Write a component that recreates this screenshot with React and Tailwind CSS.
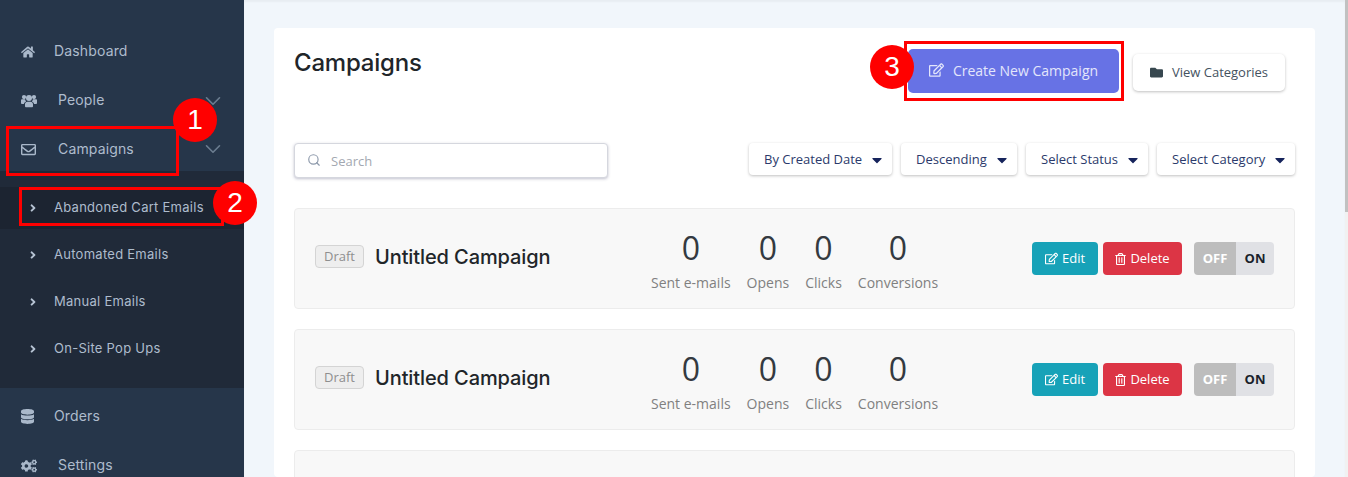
import { ChevronDown, Search } from 'lucide-react';
import {
  FaHome, FaRegEnvelope, FaDatabase, FaCogs, FaAngleRight, FaRegEdit,
  FaFolder, FaRegTrashAlt, FaCaretDown,
} from 'react-icons/fa';

const quick = "font-['Inter',sans-serif]";
const open = "font-['Open_Sans',sans-serif]";

const subLinks = ['Abandoned Cart Emails', 'Automated Emails', 'Manual Emails', 'On-Site Pop Ups'];
const filters = [
  { name: 'By Created Date', width: 'w-[143px]' },
  { name: 'Descending', width: 'w-[116px]' },
  { name: 'Select Status', width: 'w-[122px]' },
  { name: 'Select Category', width: 'w-[138px]' },
];
const stats = ['Sent e-mails', 'Opens', 'Clicks', 'Conversions'];

const UsersIcon = ({ className }) => (
  <svg viewBox="0 0 18 15" fill="currentColor" className={className}>
    <circle cx="3.4" cy="3.6" r="2.4" />
    <circle cx="14.6" cy="3.6" r="2.4" />
    <circle cx="9" cy="4.6" r="3.4" />
    <path d="M0 7.2c0-.6.5-1 1-1h3.6c.1 1 .6 1.9 1.2 2.5C4.4 9.200 3.500 10.400 3.300 11.400H1c-.6 0-1-.4-1-1zM18 7.200c0-.6-.5-1-1-1h-3.600c-.1 1-.6 1.900-1.200 2.500 1.400.5 2.300 1.700 2.500 2.700H17c.6 0 1-.4 1-1z" />
    <path d="M4.500 11.600c0-1.500 1.200-2.700 2.700-2.700h3.600c1.500 0 2.700 1.200 2.700 2.700v2.400c0 .6-.4 1-1 1h-7c-.6 0-1-.4-1-1z" />
  </svg>
);

const NavRow = ({ icon: Icon, iconSize = 'w-[15px] h-[15px]', label, wide, chevron, className = 'h-[49px]' }) => (
  <div className={`flex items-center pl-[21px] pr-[18px] text-[#aebccd] ${className}`}>
    <div className={`flex items-center ${wide ? 'w-[37px]' : 'w-[33px]'}`}>
      <Icon className={`${iconSize} text-[#a9b8ca]`} />
    </div>
    <span className={`${quick} pb-[2px] text-[14px] tracking-[0.15px]`}>{label}</span>
    {chevron && <ChevronDown strokeWidth={1.5} className="ml-auto w-[26px] h-[26px] text-[#6b7d90]" />}
  </div>
);

const Marker = ({ n, className }) => (
  <div className={`absolute w-[44px] h-[44px] rounded-full bg-[#ff0000] text-white flex items-center justify-center font-['Liberation_Sans',sans-serif] text-[28px] ${className}`}>
    {n}
  </div>
);

const CampaignRow = () => (
  <div className="flex items-center h-[101px] shrink-0 mb-[20px] px-[20px] bg-[#f8f8f8] border border-[#ececec] rounded">
    <div className="w-[336px] flex items-center">
      <span className={`${open} w-[49px] h-[23px] mb-[4px] flex items-center justify-center text-[13px] text-[#8e8e8e] bg-[#eeeeee] border border-[#d4d4d4] rounded`}>Draft</span>
      <span className={`${quick} ml-[11px] pb-[4px] text-[20px] font-medium tracking-[-0.1px] text-[#212529]`}>Untitled Campaign</span>
    </div>
    <div className={`${open} flex gap-[16px]`}>
      {stats.map((stat) => (
        <div key={stat} className="flex flex-col items-center mt-[2px]">
          <span className="text-[32px] leading-[44px] text-[#343a40]">0</span>
          <span className="text-[14px] leading-[20px] mt-[3px] text-[#808080]">{stat}</span>
        </div>
      ))}
    </div>
    <div className={`${open} ml-auto flex items-center text-[13px] text-white`}>
      <button className="w-[66px] h-[33px] flex items-center justify-center gap-[4px] bg-[#17a2b8] rounded">
        <FaRegEdit className="w-[13px] h-[13px]" />Edit
      </button>
      <button className="ml-[5px] w-[79px] h-[33px] flex items-center justify-center gap-[4px] bg-[#dc3545] rounded">
        <FaRegTrashAlt className="w-[11px] h-[12px]" />Delete
      </button>
      <div className="ml-[12px] flex h-[33px] font-bold rounded overflow-hidden">
        <span className="w-[42px] flex items-center justify-center bg-[#bdbdbd]">OFF</span>
        <span className="w-[38px] flex items-center justify-center bg-[#e0e1e5] text-[#1a1f2b]">ON</span>
      </div>
    </div>
  </div>
);

export default function App() {
  return (
    <div className="relative flex h-[477px] overflow-hidden bg-[#f1f6fb]">
      {/* Sidebar */}
      <aside className="w-[244px] shrink-0 pt-[27px] bg-[#26364a]">
        <NavRow icon={FaHome} iconSize="w-[14px] h-[14px]" label="Dashboard" />
        <NavRow icon={UsersIcon} iconSize="w-[16px] h-[15px]" label="People" wide chevron />
        <NavRow icon={FaRegEnvelope} iconSize="w-[15px] h-[15px]" label="Campaigns" wide chevron className="h-[46px] pt-[2px]" />
        <div className="pt-[13px] pb-[16px] bg-[#202a39]">
          {subLinks.map((link, i) => (
            <div key={link} className="h-[47px] flex items-center">
              <div className={`w-full h-[42px] flex items-center pl-[29px] ${i === 0 ? 'bg-[#1c2431]' : ''}`}>
                <FaAngleRight className="w-[8px] h-[12px] text-[#b6c3d3]" />
                <span className={`${quick} ml-[17px] text-[13px] tracking-[0.27px] text-[#aebccd]`}>{link}</span>
              </div>
            </div>
          ))}
        </div>
        <div className="pt-[4px]">
          <NavRow icon={FaDatabase} iconSize="w-[13px] h-[15px]" label="Orders" />
          <NavRow icon={FaCogs} iconSize="w-[16px] h-[14px]" label="Settings" wide />
        </div>
      </aside>

      {/* Main Content */}
      <main className="flex-1 pt-[28px] pl-[30px] pr-[30px] overflow-hidden shadow-[inset_0_2px_2px_rgba(0,0,0,0.04)]">
        <div className="h-full px-[20px] bg-white rounded overflow-hidden">
          <div className="flex items-start h-[115px]">
            <h1 className={`${quick} mt-[17px] text-[24px] font-medium tracking-[-0.2px] text-[#212529]`}>Campaigns</h1>
            <button className={`${open} ml-auto mt-[21px] w-[211px] h-[44px] pb-[2px] flex items-center justify-center gap-[9px] text-[14px] text-[#e3e6fb] bg-[#6772e5] rounded-[5px]`}>
              <FaRegEdit className="w-[15px] h-[14px]" />Create New Campaign
            </button>
            <button className={`${open} ml-[14px] mr-[10px] mt-[26px] w-[152px] h-[37px] flex items-center justify-center gap-[9px] text-[13px] text-[#44525f] bg-white rounded-[5px] shadow-[0_1px_3px_rgba(0,0,0,0.25)]`}>
              <FaFolder className="w-[13px] h-[13px] text-[#37474f]" />View Categories
            </button>
          </div>

          <div className="flex items-start h-[65px]">
            <div className="relative w-[314px] h-[35px] flex items-center pl-[36px] pt-[2px] border border-[#d5d7de] rounded bg-white shadow-[0_1px_3px_rgba(50,50,93,0.3)]">
              <Search className="absolute left-[12px] top-[9px] w-[14px] h-[14px] text-[#8d99ab]" />
              <span className={`${open} text-[13px] text-[#a3a8b1]`}>Search</span>
            </div>
            <div className="ml-auto flex gap-[9px]">
              {filters.map((filter) => (
                <button key={filter.name} className={`${open} ${filter.width} h-[32px] pt-[1px] flex items-center justify-between pl-[15px] pr-[7px] text-[13px] text-[#2b3a6b] bg-white rounded shadow-[0_1px_3px_rgba(0,0,0,0.25)]`}>
                  {filter.name}
                  <FaCaretDown className="w-[16px] h-[16px] text-[#16245c]" />
                </button>
              ))}
            </div>
          </div>

          <div className="flex flex-col">
            <CampaignRow />
            <CampaignRow />
            <div className="h-[101px] bg-[#f8f8f8] border border-[#ececec] rounded" />
          </div>
        </div>
      </main>

      {/* Scrollbar */}
      <div className="w-[3px] shrink-0 bg-[#f1f1f1]">
        <div className="h-[212px] bg-[#c1c1c1]" />
      </div>

      {/* Annotations */}
      <div className="absolute left-[6px] top-[126px] w-[173px] h-[50px] border-[3px] border-[#ff0000]" />
      <div className="absolute left-[19px] top-[187px] w-[205px] h-[39px] border-[3px] border-[#ff0000]" />
      <div className="absolute left-[904px] top-[41px] w-[220px] h-[60px] border-[3px] border-[#ff0000]" />
      <Marker n="1" className="left-[173px] top-[98px]" />
      <Marker n="2" className="left-[213px] top-[181px]" />
      <Marker n="3" className="left-[870px] top-[45px]" />
    </div>
  );
}
